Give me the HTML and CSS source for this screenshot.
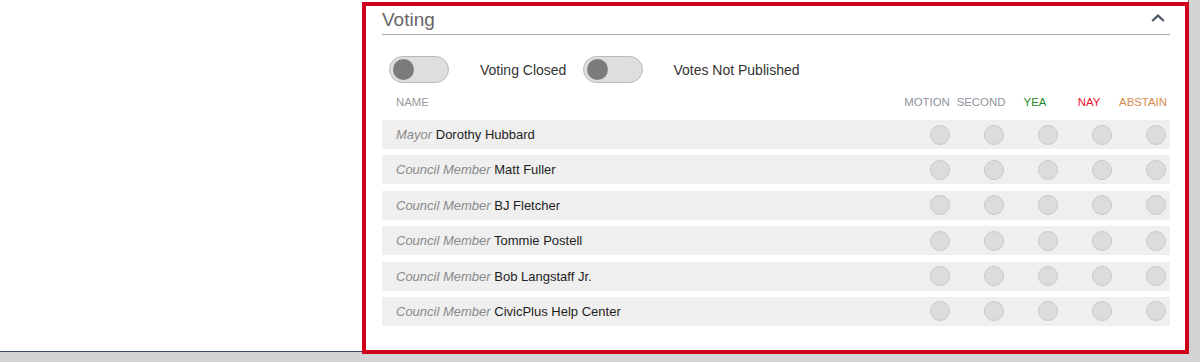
FILE: index.html
```html
<!DOCTYPE html>
<html lang="en">
<head>
<meta charset="utf-8">
<title>Voting</title>
<link rel="stylesheet" href="styles.css">
</head>
<body>
<div class="main">
  <section class="panel">
    <div class="panel-head">
      <h2 class="panel-title">Voting</h2>
      <svg class="chevron" width="14" height="8" viewBox="0 0 14 8" aria-hidden="true">
        <polyline points="1.2,7 7,1.6 12.8,7" fill="none" stroke="#4d5864" stroke-width="2.2"/>
      </svg>
    </div>
    <div class="controls">
      <span class="toggle"><span class="knob"></span></span>
      <span class="control-label">Voting Closed</span>
      <span class="toggle toggle-second"><span class="knob"></span></span>
      <span class="control-label">Votes Not Published</span>
    </div>
    <div class="table-head">
      <div class="col-name">NAME</div>
      <div class="col-vote motion">MOTION</div>
      <div class="col-vote second">SECOND</div>
      <div class="col-vote yea">YEA</div>
      <div class="col-vote nay">NAY</div>
      <div class="col-vote abstain">ABSTAIN</div>
    </div>
    <div class="rows">
      <div class="row"><div class="col-name"><em class="role">Mayor</em> <span class="person">Dorothy Hubbard</span></div><div class="cell"><span class="radio"></span></div><div class="cell"><span class="radio"></span></div><div class="cell"><span class="radio"></span></div><div class="cell"><span class="radio"></span></div><div class="cell"><span class="radio"></span></div></div>
      <div class="row"><div class="col-name"><em class="role">Council Member</em> <span class="person">Matt Fuller</span></div><div class="cell"><span class="radio"></span></div><div class="cell"><span class="radio"></span></div><div class="cell"><span class="radio"></span></div><div class="cell"><span class="radio"></span></div><div class="cell"><span class="radio"></span></div></div>
      <div class="row"><div class="col-name"><em class="role">Council Member</em> <span class="person">BJ Fletcher</span></div><div class="cell"><span class="radio"></span></div><div class="cell"><span class="radio"></span></div><div class="cell"><span class="radio"></span></div><div class="cell"><span class="radio"></span></div><div class="cell"><span class="radio"></span></div></div>
      <div class="row"><div class="col-name"><em class="role">Council Member</em> <span class="person">Tommie Postell</span></div><div class="cell"><span class="radio"></span></div><div class="cell"><span class="radio"></span></div><div class="cell"><span class="radio"></span></div><div class="cell"><span class="radio"></span></div><div class="cell"><span class="radio"></span></div></div>
      <div class="row"><div class="col-name"><em class="role">Council Member</em> <span class="person">Bob Langstaff Jr.</span></div><div class="cell"><span class="radio"></span></div><div class="cell"><span class="radio"></span></div><div class="cell"><span class="radio"></span></div><div class="cell"><span class="radio"></span></div><div class="cell"><span class="radio"></span></div></div>
      <div class="row"><div class="col-name"><em class="role">Council Member</em> <span class="person">CivicPlus Help Center</span></div><div class="cell"><span class="radio"></span></div><div class="cell"><span class="radio"></span></div><div class="cell"><span class="radio"></span></div><div class="cell"><span class="radio"></span></div><div class="cell"><span class="radio"></span></div></div>
    </div>
  </section>
</div>
</body>
</html>
```

FILE: styles.css
```css
html, body {
  margin: 0;
  padding: 0;
}

body {
  width: 1200px;
  height: 362px;
  overflow: hidden;
  background: #d3d4d6;
  font-family: "Liberation Sans", Arial, sans-serif;
  color: #222;
}

.main {
  width: 1188px;
  height: 351px;
  background: #fff;
  border-bottom: 1px solid #3d4a5f;
  border-right: 1px solid #6a6f78;
  display: flex;
  align-items: flex-start;
}

.panel {
  box-sizing: border-box;
  flex: none;
  width: 827px;
  height: 352px;
  margin: 2px 0 0 362px;
  border: 4px solid #d0021b;
  background: #fff;
  padding: 0 15px 0 16px;
}

.panel-head {
  display: flex;
  align-items: center;
  justify-content: space-between;
  height: 28px;
  border-bottom: 1px solid #a9a9a9;
}

.panel-title {
  margin: 0;
  font-size: 19px;
  line-height: 28px;
  font-weight: normal;
  color: #666;
}

.chevron {
  margin: 0 5px 4px 0;
}

.controls {
  display: flex;
  align-items: center;
  height: 27px;
  margin-top: 21px;
  font-size: 14px;
  color: #333;
}

.toggle {
  box-sizing: border-box;
  width: 60px;
  height: 27px;
  border: 1px solid #b9b9b9;
  border-radius: 14px;
  background: #dedede;
  display: flex;
  align-items: center;
  padding-left: 3px;
  margin-left: 7px;
}

.toggle-second {
  margin-left: 17px;
}

.knob {
  width: 21px;
  height: 21px;
  border-radius: 50%;
  background: #7b7b7b;
}

.control-label {
  margin-left: 31px;
}

.control-label:last-child {
  margin-left: 30px;
}

.table-head {
  display: flex;
  align-items: center;
  height: 37px;
  font-size: 11.4px;
  color: #999;
}

.col-name {
  flex: 1;
  padding-left: 14px;
}

.col-vote {
  width: 54px;
  text-align: center;
}

.motion, .second { color: #8c939b; }
.yea { color: #1e8a2a; }
.nay { color: #ee1230; }
.abstain { color: #d5894a; }

.rows {
  display: flex;
  flex-direction: column;
  gap: 6.4px;
}

.row {
  display: flex;
  align-items: center;
  height: 29px;
  background: #efefef;
  font-size: 13px;
}

.role {
  color: #8a8a8a;
}

.person {
  color: #1e1e1e;
}

.cell {
  width: 54px;
  display: flex;
  justify-content: flex-end;
  padding-right: 4px;
  box-sizing: border-box;
}

.radio {
  box-sizing: border-box;
  width: 20px;
  height: 20px;
  border-radius: 50%;
  background: #dcdcdc;
  border: 1px solid #c9c9c9;
}
```
